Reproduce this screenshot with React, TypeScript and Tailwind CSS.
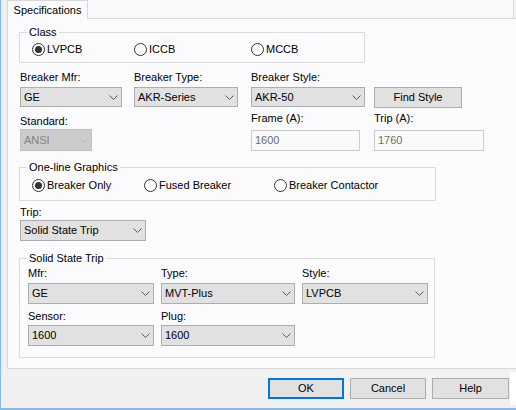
import React from 'react';
import clsx from 'clsx';

function Chevron({ disabled }: { disabled?: boolean }) {
  return (
    <svg width="9" height="5" viewBox="0 0 9 5" className="shrink-0">
      <path
        d="M0.5 0.5 L4.5 4.5 L8.5 0.5"
        fill="none"
        stroke={disabled ? '#b4b4b4' : '#5a5a5a'}
        strokeWidth="1"
      />
    </svg>
  );
}

function Combo({ value, className, disabled }: { value: string; className?: string; disabled?: boolean }) {
  return (
    <div
      className={clsx(
        'flex items-center justify-between border pl-[3px] pr-[3px]',
        disabled ? 'border-[#bfbfbf] bg-[#cccccc] text-[#838383]' : 'border-[#adadad] bg-[#e1e1e1]',
        className
      )}
    >
      <span>{value}</span>
      <Chevron disabled={disabled} />
    </div>
  );
}

function TextBox({ value, className }: { value: string; className?: string }) {
  return (
    <div className={clsx('flex items-center border border-[#cccccc] bg-[#fafafa] pl-[3px] text-[#6d6d6d]', className)}>
      {value}
    </div>
  );
}

function Label({ children, className }: { children: React.ReactNode; className?: string }) {
  return <div className={clsx('h-[13px] leading-[13px] whitespace-nowrap', className)}>{children}</div>;
}

function Radio({ label, checked, className }: { label: string; checked?: boolean; className?: string }) {
  return (
    <div className={clsx('flex h-[13px] items-center', className)}>
      <div className="flex h-[13px] w-[13px] shrink-0 items-center justify-center rounded-full border border-[#333333] bg-white">
        {checked && <div className="h-[7px] w-[7px] rounded-full bg-[#333333]" />}
      </div>
      <span className="ml-[2px] leading-[13px] whitespace-nowrap">{label}</span>
    </div>
  );
}

function Group({ title, className, children }: { title: string; className?: string; children: React.ReactNode }) {
  return (
    <fieldset className={clsx('border border-[#dcdcdc]', className)}>
      <legend className="ml-[7px] px-[2px] leading-[14px]">{title}</legend>
      {children}
    </fieldset>
  );
}

function Button({ label, primary, className }: { label: string; primary?: boolean; className?: string }) {
  return (
    <div
      className={clsx(
        'flex items-center justify-center bg-[#e1e1e1]',
        primary ? 'border-2 border-[#0078d7]' : 'border border-[#adadad]',
        className
      )}
    >
      {label}
    </div>
  );
}

export default function App() {
  return (
    <div className="flex h-[410px] w-[516px] flex-col overflow-hidden border-b-2 border-l border-[#84baec] bg-[#f0f0f0] font-['Liberation_Sans',Arial,sans-serif] text-[11px] text-black">
      {/* Tab strip */}
      <div className="flex h-[19px] shrink-0 pl-[6px]">
        <div className="flex h-[19px] w-[81px] items-center justify-center border-x border-t border-[#d9d9d9] bg-[#fbfbfd]">
          Specifications
        </div>
        <div className="flex-1 border-b border-[#d9d9d9]">
          <div className="h-full w-[426px] border-r border-[#dcdcdc] bg-[#f9f9fb]" />
        </div>
      </div>

      {/* Tab page */}
      <div className="ml-[6px] flex h-[350px] shrink-0 flex-col border-b border-l border-[#d9d9d9] bg-[#fbfbfd] pl-[11px] pt-[6px]">
        <Group title="Class" className="w-[346px]">
          <div className="flex pb-[6px] pl-[12px] pt-[4px]">
            <Radio label="LVPCB" checked className="w-[102px]" />
            <Radio label="ICCB" className="w-[117px]" />
            <Radio label="MCCB" />
          </div>
        </Group>

        <div className="ml-[1px] mt-[8px] grid grid-cols-[114px_117px_123px_auto]">
          <div>
            <Label>Breaker Mfr:</Label>
            <Combo value="GE" className="mt-[3px] h-[20px] w-[102px]" />
          </div>
          <div>
            <Label>Breaker Type:</Label>
            <Combo value="AKR-Series" className="mt-[3px] h-[20px] w-[104px]" />
          </div>
          <div>
            <Label>Breaker Style:</Label>
            <Combo value="AKR-50" className="mt-[3px] h-[20px] w-[114px]" />
          </div>
          <div className="pt-[16px]">
            <Button label="Find Style" className="h-[21px] w-[88px]" />
          </div>
        </div>

        <div className="ml-[1px] grid grid-cols-[114px_117px_123px_auto]">
          <div className="pt-[7px]">
            <Label>Standard:</Label>
            <Combo value="ANSI" disabled className="mt-[1px] h-[22px] w-[72px]" />
          </div>
          <div />
          <div className="pt-[4px]">
            <Label>Frame (A):</Label>
            <TextBox value="1600" className="mt-[5px] h-[21px] w-[109px]" />
          </div>
          <div className="pt-[4px]">
            <Label>Trip (A):</Label>
            <TextBox value="1760" className="mt-[5px] h-[21px] w-[110px]" />
          </div>
        </div>

        <Group title="One-line Graphics" className="mt-[9px] w-[417px]">
          <div className="flex pb-[8px] pl-[12px] pt-[5px]">
            <Radio label="Breaker Only" checked className="w-[112px]" />
            <Radio label="Fused Breaker" className="w-[130px]" />
            <Radio label="Breaker Contactor" />
          </div>
        </Group>

        <div className="ml-[1px] mt-[5px]">
          <Label>Trip:</Label>
          <Combo value="Solid State Trip" className="mt-[1px] h-[21px] w-[126px]" />
        </div>

        <Group title="Solid State Trip" className="mt-[10px] w-[416px]">
          <div className="grid grid-cols-[133px_141px_auto] pb-[11px] pl-[8px] pt-[2px]">
            <div>
              <Label>Mfr:</Label>
              <Combo value="GE" className="mt-[3px] h-[21px] w-[126px]" />
            </div>
            <div>
              <Label>Type:</Label>
              <Combo value="MVT-Plus" className="mt-[3px] h-[21px] w-[134px]" />
            </div>
            <div>
              <Label>Style:</Label>
              <Combo value="LVPCB" className="mt-[3px] h-[21px] w-[126px]" />
            </div>
            <div className="pt-[6px]">
              <Label>Sensor:</Label>
              <Combo value="1600" className="mt-[2px] h-[21px] w-[126px]" />
            </div>
            <div className="pt-[6px]">
              <Label>Plug:</Label>
              <Combo value="1600" className="mt-[2px] h-[21px] w-[134px]" />
            </div>
            <div />
          </div>
        </Group>
      </div>

      {/* Dialog buttons */}
      <div className="flex h-[39px] shrink-0 items-start justify-end">
        <Button label="OK" primary className="mt-[9px] h-[21px] w-[76px]" />
        <Button label="Cancel" className="ml-[6px] mt-[9px] h-[21px] w-[76px]" />
        <Button label="Help" className="ml-[6px] mt-[9px] h-[21px] w-[77px]" />
        <div className="ml-[1px] mt-[3px] h-[33px] w-[6px] bg-white" />
      </div>
    </div>
  );
}
